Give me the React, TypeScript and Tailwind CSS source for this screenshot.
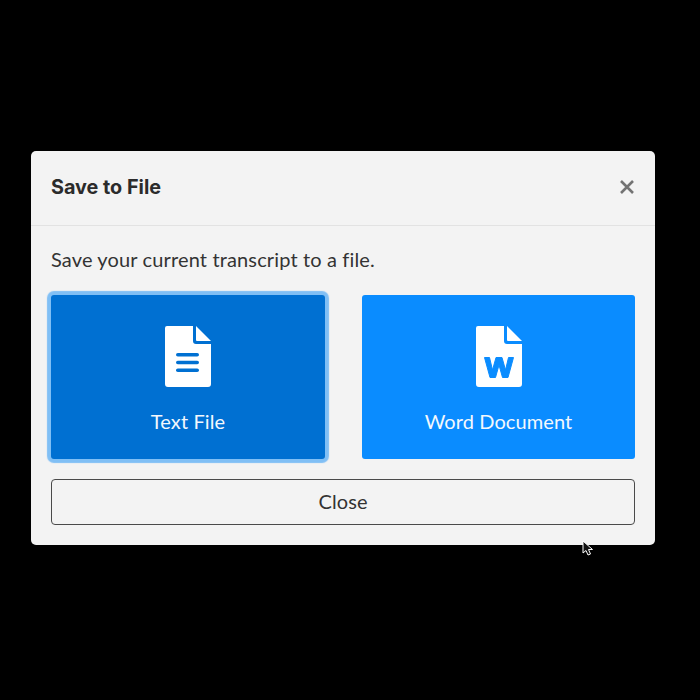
import React from "react";

function TextFileIcon() {
  return (
    <svg width="46" height="61" viewBox="0 0 46 61" aria-hidden="true">
      <path fill="#fff" d="M2 0H28V15a3 3 0 0 0 3 3H46V58a3 3 0 0 1-3 3H3a3 3 0 0 1-3-3V2a2 2 0 0 1 2-2Z" />
      <path fill="#fff" d="M31 0 46 15H32a1 1 0 0 1-1-1Z" />
      <rect x="11" y="27" width="23" height="3.600" rx="1.800" fill="#0070d2" />
      <rect x="11" y="34.700" width="23" height="3.600" rx="1.800" fill="#0070d2" />
      <rect x="11" y="42.400" width="23" height="3.600" rx="1.800" fill="#0070d2" />
    </svg>
  );
}

function WordIcon() {
  return (
    <svg width="46" height="61" viewBox="0 0 46 61" aria-hidden="true">
      <path fill="#fff" d="M2 0H28V15a3 3 0 0 0 3 3H46V58a3 3 0 0 1-3 3H3a3 3 0 0 1-3-3V2a2 2 0 0 1 2-2Z" />
      <path fill="#fff" d="M31 0 46 15H32a1 1 0 0 1-1-1Z" />
      <path fill="#0a8cff" stroke="#0a8cff" strokeWidth="1" strokeLinejoin="round" d="M8.500 31.500h5l3 12.500 3.500-12.500h6l3.500 12.500 3-12.500h5l-5.500 20h-5.500l-3.500-12.500-3.500 12.500h-5.500Z" />
    </svg>
  );
}

export default function App() {
  return (
    <div className="min-h-[700px] w-[700px] overflow-hidden bg-black pl-[31px] pt-[151px] font-['Lato',sans-serif]">
      <div className="relative w-[624px] rounded-[5px] bg-[#f3f3f3] text-[#333333]">
        <div className="flex h-[75px] items-center justify-between border-b border-[#e2e2e2] px-5">
          <h1 className="font-['Inter',sans-serif] text-[19.800px] font-bold text-[#2b2b2b]">Save to File</h1>
          <svg width="16" height="16" viewBox="0 0 16 16" aria-hidden="true" className="-mt-[2px]">
            <path d="M2 2 14 14M14 2 2 14" stroke="#737373" strokeWidth="2.600" fill="none" />
          </svg>
        </div>
        <div className="px-5 pb-5 pt-[22px]">
          <p className="text-[20px] leading-[22px] tracking-[0.14px]">Save your current transcript to a file.</p>
          <div className="mt-[25px] grid grid-cols-[274px_273px] gap-[37px]">
            <button className="flex h-[164px] flex-col items-center rounded-[3px] bg-[#0070d2] pt-[31px] text-[#f3f8fd] shadow-[0_0_1px_4px_#80bff5]">
              <TextFileIcon />
              <span className="mt-[22px] text-[20px] leading-[24px] tracking-[0.1px]">Text File</span>
            </button>
            <button className="flex h-[164px] flex-col items-center rounded-[3px] bg-[#0a8cff] pt-[31px] text-[#f3f8fd]">
              <WordIcon />
              <span className="mt-[22px] text-[20px] leading-[24px] tracking-[0.1px]">Word Document</span>
            </button>
          </div>
          <button className="mt-5 flex h-[46px] w-full items-center justify-center rounded-[4px] border border-[#4a4a4a] pb-[2px] text-[20px] tracking-[0.1px]">Close</button>
        </div>
        <svg width="13" height="17" viewBox="0 0 13 17" aria-hidden="true" className="absolute left-[551px] top-[389px]">
          <path d="M1 1v12l3-2.500 2 4.500 2.500-1-2-4.500h4Z" fill="#111" stroke="#fff" strokeWidth="1" />
        </svg>
      </div>
    </div>
  );
}
